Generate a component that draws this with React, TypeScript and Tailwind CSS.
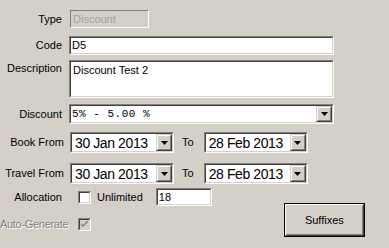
import React from "react";

function Sunken({ className = "", inner = "", children }: { className?: string; inner?: string; children?: React.ReactNode }) {
  return (
    <div className={`border border-t-[#808080] border-l-[#808080] border-r-white border-b-white ${className}`}>
      <div className={`h-full border border-t-[#404040] border-l-[#404040] border-r-[#d4d0c8] border-b-[#d4d0c8] ${inner}`}>
        {children}
      </div>
    </div>
  );
}

function ArrowBtn() {
  return (
    <div className="w-[16px] h-full border border-t-[#d4d0c8] border-l-[#d4d0c8] border-r-[#404040] border-b-[#404040]">
      <div className="h-full flex items-center justify-center border border-t-white border-l-white border-r-[#808080] border-b-[#808080] bg-[#d4d0c8]">
        <svg width="7" height="4" viewBox="0 0 7 4">
          <path d="M0 0h7L3.5 4z" fill="#000" />
        </svg>
      </div>
    </div>
  );
}

function DateBox({ value }: { value: string }) {
  return (
    <Sunken className="w-[104px] h-full" inner="bg-white flex">
      <div className="flex-1 pl-[3px] text-[14px] leading-none tracking-[-0.4px] flex items-center">{value}</div>
      <ArrowBtn />
    </Sunken>
  );
}

function Label({ w, children }: { w: string; children: React.ReactNode }) {
  return <div className={`${w} text-right shrink-0 whitespace-nowrap`}>{children}</div>;
}

export default function App() {
  return (
    <div className="w-[389px] h-[248px] bg-[#d4d0c8] font-['Liberation_Sans',Arial,sans-serif] text-[11px] text-black leading-none overflow-hidden pt-[10px]">
      {/* Type */}
      <div className="flex items-center h-[18px]">
        <Label w="w-[62px]">Type</Label>
        <div className="ml-[8px] w-[79px] h-full border border-t-[#808080] border-l-[#808080] border-r-white border-b-white bg-[#d4d0c8] flex items-center pl-[2px] text-[#a0a0a0]">
          Discount
        </div>
      </div>

      {/* Code */}
      <div className="flex items-center h-[19px] mt-[8px]">
        <Label w="w-[62px]">Code</Label>
        <Sunken className="ml-[7px] w-[265px] h-full" inner="bg-white flex items-center pl-[1px]">
          D5
        </Sunken>
      </div>

      {/* Description */}
      <div className="flex h-[38px] mt-[5px]">
        <Label w="w-[62px] pt-[3px]">Description</Label>
        <Sunken className="ml-[7px] w-[265px] h-full" inner="bg-white pl-[2px] pt-[3px]">
          Discount Test 2
        </Sunken>
      </div>

      {/* Discount */}
      <div className="flex items-center h-[20px] mt-[6px]">
        <Label w="w-[62px]">Discount</Label>
        <Sunken className="ml-[7px] w-[265px] h-full" inner="bg-white flex">
          <div className="flex-1 flex items-center pl-[1px] font-['Liberation_Mono',monospace] text-[11px] tracking-[0.5px]">
            5% - 5.00 %
          </div>
          <ArrowBtn />
        </Sunken>
      </div>

      {/* Book From */}
      <div className="flex items-center h-[21px] mt-[8px]">
        <Label w="w-[64px]">Book From</Label>
        <div className="ml-[6px] h-full">
          <DateBox value="30 Jan 2013" />
        </div>
        <div className="ml-[8px]">To</div>
        <div className="ml-[10px] h-full">
          <DateBox value="28 Feb 2013" />
        </div>
      </div>

      {/* Travel From */}
      <div className="flex items-center h-[21px] mt-[10px]">
        <Label w="w-[64px]">Travel From</Label>
        <div className="ml-[6px] h-full">
          <DateBox value="30 Jan 2013" />
        </div>
        <div className="ml-[8px]">To</div>
        <div className="ml-[10px] h-full">
          <DateBox value="28 Feb 2013" />
        </div>
      </div>

      {/* Allocation / Auto-Generate / Suffixes */}
      <div className="flex mt-[4px]">
        <div className="flex flex-col">
          <div className="flex items-center h-[18px]">
            <Label w="w-[62px]">Allocation</Label>
            <Sunken className="ml-[16px] w-[13px] h-[13px]" inner="bg-white" />
            <div className="ml-[6px]">Unlimited</div>
            <Sunken className="ml-[13px] w-[56px] h-full" inner="bg-white flex items-center pl-[1px]">
              18
            </Sunken>
          </div>
          <div className="flex items-center h-[13px] mt-[12px]">
            <div className="w-[78px] shrink-0 whitespace-nowrap text-[#808080] [text-shadow:1px_1px_0_#fff] tracking-[-0.3px]">
              Auto-Generate
            </div>
            <Sunken className="w-[13px] h-[13px]" inner="bg-[#d4d0c8] flex items-center justify-center">
              <svg width="7" height="7" viewBox="0 0 7 7">
                <path d="M0 2l2 2 5-5v2l-5 5-2-2z" fill="#808080" />
              </svg>
            </Sunken>
          </div>
        </div>
        <div className="ml-[72px] mt-[15px] w-[81px] h-[34px] border border-black">
          <div className="h-full border border-t-white border-l-white border-r-[#404040] border-b-[#404040]">
            <div className="h-full border border-t-[#d4d0c8] border-l-[#d4d0c8] border-r-[#808080] border-b-[#808080] bg-[#d4d0c8] flex items-center justify-center">
              Suffixes
            </div>
          </div>
        </div>
      </div>
    </div>
  );
}
